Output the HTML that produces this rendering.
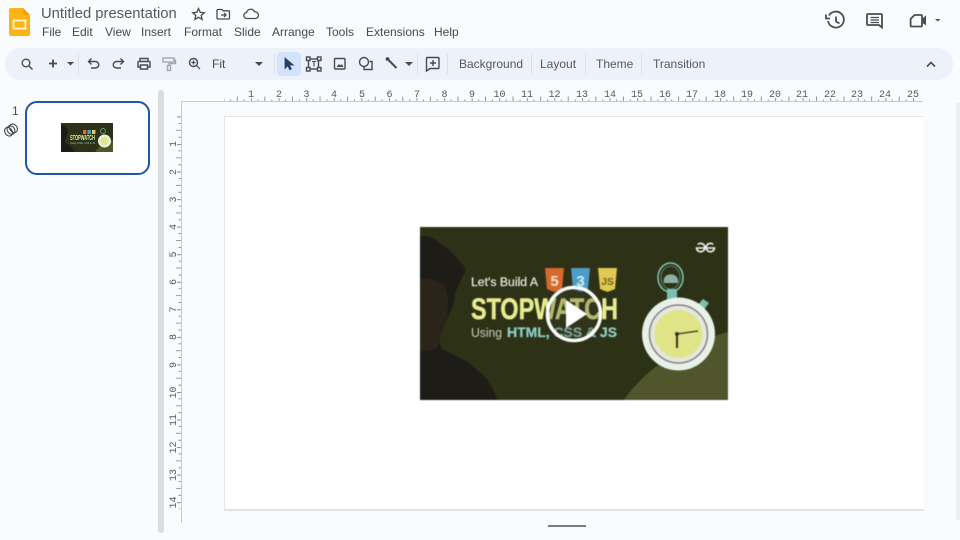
<!DOCTYPE html>
<html><head><meta charset="utf-8"><title>Untitled presentation</title>
<style>
*{box-sizing:border-box}
html,body{margin:0;padding:0;width:960px;height:540px;overflow:hidden;background:#f9fbfd;font-family:"Liberation Sans",sans-serif;color:#444746}
.a{position:absolute}
#title{left:41px;top:5px;font-size:14.800px;color:#55595d;white-space:nowrap;line-height:18px}
.m{position:absolute;top:25px;font-size:12px;line-height:15px;color:#46494c;white-space:nowrap}
#tb{left:5px;top:48px;width:948px;height:32px;background:#edf2fa;border-radius:16px}
.t{position:absolute;top:56.500px;font-size:12px;line-height:15px;color:#55595d;white-space:nowrap}
.sep{position:absolute;top:54px;width:1px;height:20px;background:#dbe0e7}
svg{position:absolute;overflow:visible}
#slide{left:224px;top:116px;width:700px;height:395px;background:#fff;border-left:1px solid #e6e6e6;border-top:1px solid #e6e6e6;border-bottom:2px solid #e3e3e3}
</style></head><body>

<svg style="left:9px;top:8px" width="22" height="29" viewBox="0 0 22 29"><path d="M2 0H14L21 7V26a2 2 0 0 1-2 2H2a2 2 0 0 1-2-2V2a2 2 0 0 1 2-2z" fill="#fbb416"/><path d="M14 0L21 7H16a2 2 0 0 1-2-2z" fill="#f29e0c"/><rect x="4.500" y="12.500" width="12" height="8" fill="none" stroke="#fff3d2" stroke-width="1.800"/></svg>

<div id="title" class="a">Untitled presentation</div>
<svg style="left:191px;top:6px" width="70" height="16" viewBox="0 0 70 16" fill="none" stroke="#4a4d50" stroke-width="1.300"><path d="M7.500 2.500l1.700 3.800 4.100.4-3.100 2.700.9 4-3.600-2.100-3.600 2.100.9-4-3.100-2.700 4.100-.4z"/><path d="M27 3.500h4l1.300 1.300h5.200a1 1 0 0 1 1 1v6.200a1 1 0 0 1-1 1H27a1 1 0 0 1-1-1V4.500a1 1 0 0 1 1-1zM30 9h5M33 7l2 2-2 2"/><path d="M56 12.500a3 3 0 0 1-.4-6 4.200 4.200 0 0 1 8-.6 3.300 3.300 0 0 1 1 6.600z"/></svg>

<div class="m" style="left:42px">File</div><div class="m" style="left:72px">Edit</div><div class="m" style="left:105px">View</div><div class="m" style="left:141px">Insert</div><div class="m" style="left:184px">Format</div><div class="m" style="left:234px">Slide</div><div class="m" style="left:272px">Arrange</div><div class="m" style="left:326px">Tools</div><div class="m" style="left:366px">Extensions</div><div class="m" style="left:434px">Help</div>

<svg style="left:825px;top:10px" width="120" height="22" viewBox="0 0 120 22" fill="none" stroke="#4b4e51" stroke-width="1.800"><path d="M4 5.500A8 8 0 1 1 3 11M1 4.500v4h4M11 6.500v5l3.500 2"/><path d="M43 4h13a1 1 0 0 1 1 1v10l0 2.500-3-2.500H43a1 1 0 0 1-1-1V5a1 1 0 0 1 1-1z"/><path d="M45.500 7.500h8.500M45.500 10h8.500M45.500 12.500h8.500" stroke-width="1.300"/><path d="M89.500 5h6.500a1 1 0 0 1 1 1v9.500a1 1 0 0 1-1 1h-9.500a.9.900 0 0 1-.9-.9V9z"/><path d="M97 9.500l3.500-3v8l-3.500-2.500z" fill="#4b4e51" stroke-width="1"/><path d="M110 9h5.500l-2.750 2.500z" fill="#4b4e51" stroke="none"/></svg>

<div id="tb" class="a"></div>
<div class="a" style="left:277px;top:52px;width:24px;height:24px;background:#d3e3fd;border-radius:4px"></div>
<svg style="left:0;top:48px" width="960" height="32" viewBox="0 0 960 32" fill="none" stroke="#484b4e" stroke-width="1.400">
<circle cx="26" cy="15" r="3.800"/><path d="M29 18l3.500 3.500"/>
<path d="M53 11.500v8M49 15.500h8" stroke-width="1.800"/><path d="M67 14h7l-3.500 3.500z" fill="#484b4e" stroke="none"/>
<path d="M89 13.500h6.500a3.200 3.200 0 0 1 0 6.500H91M91.500 10.500l-3 3 3 3"/>
<path d="M123 13.500h-6.500a3.200 3.200 0 0 0 0 6.500H121M120.500 10.500l3 3-3 3"/>
<path d="M140 14v-3.500h8V14M140 19h-2v-4.500a1 1 0 0 1 1-1h10a1 1 0 0 1 1 1V19h-2M140.500 17h7v4h-7z"/>
<g stroke="#a5a9ae"><rect x="163" y="10" width="11" height="4"/><path d="M174 12h1.500v3.500H169V17"/><rect x="167.500" y="17.500" width="3" height="5"/></g>
<circle cx="193.500" cy="14.500" r="4"/><path d="M196.500 17.500l3.500 3.500M191.500 14.500h4M193.500 12.500v4" stroke-width="1.200"/>
<path d="M255 14h8l-4 4z" fill="#484b4e" stroke="none"/>
<path d="M285 10v10.500l2.800-2.800 2 4 1.600-.8-2-3.900h4z" fill="#2c3e63" stroke="#2c3e63" stroke-width=".8"/>
<rect x="308.500" y="11" width="10" height="10"/><g fill="#f1f4fa"><rect x="306.500" y="9" width="3.500" height="3.500"/><rect x="317.500" y="9" width="3.500" height="3.500"/><rect x="306.500" y="19.500" width="3.500" height="3.500"/><rect x="317.500" y="19.500" width="3.500" height="3.500"/></g><path d="M312 13.500h4M314 13.500v5" stroke-width="1.100"/>
<rect x="334.500" y="10.500" width="10.500" height="10.500" rx="1"/><path d="M336.500 19l2.500-3 1.500 1.500 1.500-1.500 1.500 3z" fill="#484b4e" stroke="none"/>
<circle cx="364" cy="14" r="4.500"/><path d="M369.500 13.500h2.500v8h-8v-3"/>
<path d="M387.500 11l9 9" stroke-width="2"/><circle cx="387.500" cy="11" r="1.200" fill="#484b4e"/>
<path d="M405 14h8l-4 4z" fill="#484b4e" stroke="none"/>
<path d="M427 9.500h11a1 1 0 0 1 1 1v9a1 1 0 0 1-1 1h-8l-3.500 2.500V10.500a1 1 0 0 1 .5-1zM433 12v6M430 15h6"/>
<path d="M927 18.500l4-4 4 4" stroke-width="1.600"/>
</svg>
<div class="sep" style="left:78px"></div><div class="sep" style="left:274px"></div><div class="sep" style="left:417px"></div><div class="sep" style="left:447px"></div><div class="sep" style="left:531px"></div><div class="sep" style="left:585px"></div><div class="sep" style="left:641px"></div>
<div class="t" style="left:212px;color:#46494c">Fit</div><div class="t" style="left:459px">Background</div><div class="t" style="left:540px">Layout</div><div class="t" style="left:596px">Theme</div><div class="t" style="left:653px">Transition</div>

<div class="a" style="left:12px;top:104px;font-size:12px;line-height:15px;color:#4a4d50">1</div>
<svg style="left:3px;top:122px" width="16" height="16" viewBox="0 0 16 16" fill="none" stroke="#45484b" stroke-width="1.100"><g transform="rotate(-35 8 8)"><ellipse cx="5" cy="8" rx="3.600" ry="4.600"/><ellipse cx="8" cy="8" rx="3.600" ry="4.600"/><ellipse cx="11" cy="8" rx="3.600" ry="4.600"/></g></svg>

<div class="a" style="left:25px;top:101px;width:125px;height:74px;background:#fff;border:2px solid #1f57a8;border-radius:12px"></div>
<svg style="left:61px;top:123px;filter:blur(.3px)" width="52" height="29" viewBox="0 0 52 29"><rect width="52" height="29" fill="#2d3216"/><path d="M0 2c4 0 7 4 7 7-1 4-3 6-3 11 4 1 8 4 9 9H0z" fill="#1c1b18"/><path d="M34 29c4-6 10-10 18-12v12z" fill="#50552b"/><rect x="22" y="7" width="3.400" height="4" fill="#dd6b2e"/><rect x="26.500" y="7" width="3.400" height="4" fill="#4b9cc9"/><rect x="31" y="7" width="3.400" height="4" fill="#e4c957"/><text x="9" y="17" font-family="Liberation Sans" font-weight="700" font-size="7" fill="#e3e88e" textLength="25" lengthAdjust="spacingAndGlyphs">STOPWATCH</text><text x="9" y="21" font-family="Liberation Sans" font-size="3" fill="#8ed0c6" textLength="25" lengthAdjust="spacingAndGlyphs">Using HTML, CSS &amp; JS</text><circle cx="43.500" cy="18" r="6.500" fill="#e9f0dc"/><circle cx="43.500" cy="18" r="4" fill="#dfe58a"/><circle cx="42" cy="8" r="2.500" fill="none" stroke="#7cb4a8" stroke-width=".7"/></svg>

<div class="a" style="left:158px;top:90px;width:6px;height:443px;background:#dadcdf;border-radius:3px"></div>
<div class="a" style="left:956px;top:103px;width:4px;height:417px;background:#eceef0"></div>

<svg style="left:181px;top:84px" width="750" height="20" viewBox="181 84 750 20" font-family="Liberation Mono" font-size="10" fill="#55585b" text-anchor="middle">
<defs><pattern id="hr" x="223.500" y="84" width="27.580" height="18" patternUnits="userSpaceOnUse"><g stroke="#7a7d80" stroke-width=".8"><path d="M.4 14v4M6.900 15.500V18M13.800 12.500V18M20.700 15.500V18"/></g></pattern>
<pattern id="vr" x="172" y="116.500" width="10" height="27.550" patternUnits="userSpaceOnUse"><g stroke="#7a7d80" stroke-width=".8"><path d="M5 .4h4M6.500 6.900H9M4 13.800h5M6.500 20.700H9"/></g></pattern></defs>
<rect x="224" y="84" width="692" height="18" fill="url(#hr)"/><path d="M181 101.500H923" stroke="#c8cbce" stroke-width="1"/>
<text x="251" y="97">1</text><text x="279" y="97">2</text><text x="306.500" y="97">3</text><text x="334" y="97">4</text><text x="362" y="97">5</text><text x="389.500" y="97">6</text><text x="417" y="97">7</text><text x="444.500" y="97">8</text><text x="472" y="97">9</text><text x="499.500" y="97">10</text><text x="527" y="97">11</text><text x="554.500" y="97">12</text><text x="582" y="97">13</text><text x="610" y="97">14</text><text x="637" y="97">15</text><text x="665" y="97">16</text><text x="692" y="97">17</text><text x="720" y="97">18</text><text x="747" y="97">19</text><text x="775" y="97">20</text><text x="802" y="97">21</text><text x="830" y="97">22</text><text x="857" y="97">23</text><text x="885" y="97">24</text><text x="913" y="97">25</text>
</svg>
<svg style="left:165px;top:100px" width="20" height="425" viewBox="165 100 20 425" font-family="Liberation Mono" font-size="10" fill="#55585b" text-anchor="middle">
<rect x="172" y="116" width="10" height="393" fill="url(#vr)"/><path d="M181.500 102V523" stroke="#c8cbce"/>
<text transform="translate(176 144) rotate(-90)">1</text><text transform="translate(176 172) rotate(-90)">2</text><text transform="translate(176 199.500) rotate(-90)">3</text><text transform="translate(176 227) rotate(-90)">4</text><text transform="translate(176 254.500) rotate(-90)">5</text><text transform="translate(176 282) rotate(-90)">6</text><text transform="translate(176 309.500) rotate(-90)">7</text><text transform="translate(176 337) rotate(-90)">8</text><text transform="translate(176 365) rotate(-90)">9</text><text transform="translate(176 392.500) rotate(-90)">10</text><text transform="translate(176 420) rotate(-90)">11</text><text transform="translate(176 447.500) rotate(-90)">12</text><text transform="translate(176 475) rotate(-90)">13</text><text transform="translate(176 502.500) rotate(-90)">14</text>
</svg>

<div id="slide" class="a"></div>

<svg style="left:420px;top:227px;filter:blur(.45px)" width="308" height="173" viewBox="0 0 308 173">
<rect width="308" height="173" fill="#2d3216"/>
<path d="M204 173c22-32 58-55 104-68v68z" fill="#50552b"/>
<path d="M0 9c7-1 14 2 20 7 8 5 14 11 20 19 4 3 6 6 5 9-2 6-6 12-8 18-3 5-2 10-4 16-3 8-6 14-9 20-3 7-5 14-4 20l2 4 26 13 14 12c8 7 14 20 15 26H0z" fill="#1e1c17"/>
<path d="M0 52c8-2 18 2 24 6 4 8 5 18 3 28-2 12-6 24-10 35-4 2-10 3-17 3z" fill="#2b241b"/>
<text x="51" y="59" font-family="Liberation Sans" font-size="11.500" fill="#f2f3ee" textLength="67" lengthAdjust="spacingAndGlyphs" stroke="#f2f3ee" stroke-width=".15">Let's Build A</text>
<path d="M125 41h19l-2 21-7.500 3-7.500-3z" fill="#d9682c"/><text x="134.500" y="59" font-family="Liberation Sans" font-weight="700" font-size="15" fill="#f6e6c8" text-anchor="middle">5</text>
<path d="M151 41h19l-2 21-7.500 3-7.500-3z" fill="#4c9dc9"/><text x="160.500" y="59" font-family="Liberation Sans" font-weight="700" font-size="15" fill="#d9eef0" text-anchor="middle">3</text>
<path d="M178 41h19l-2 21-7.500 3-7.500-3z" fill="#e2c752"/><text x="187.500" y="58" font-family="Liberation Sans" font-weight="700" font-size="10.500" fill="#6e6524" text-anchor="middle">JS</text>
<text x="51" y="92" font-family="Liberation Sans" font-weight="700" font-size="30" fill="#e6ec8f" stroke="#e6ec8f" stroke-width=".5" textLength="147" lengthAdjust="spacingAndGlyphs">STOPWATCH</text>
<text x="51" y="110" font-family="Liberation Sans" font-size="13" fill="#c9cfc0" textLength="31" lengthAdjust="spacingAndGlyphs">Using</text>
<text x="87" y="110" font-family="Liberation Sans" font-weight="700" font-size="14" fill="#8ed0c6" stroke="#8ed0c6" stroke-width=".25" textLength="110" lengthAdjust="spacingAndGlyphs">HTML, CSS &amp; JS</text>
<circle cx="154" cy="87" r="26.500" fill="#3b3f24" fill-opacity=".3" stroke="#fff" stroke-width="3.500"/>
<path d="M146 73l21 14-21 14z" fill="#fff"/>
<g fill="none" stroke="#f2f3ee" stroke-width="1.600"><path d="M277.800 17.500A4.200 4.200 0 1 1 276.500 21H285.500"/><path d="M293.200 17.500A4.200 4.200 0 1 0 294.500 21H285.500"/></g>
<ellipse cx="250.500" cy="50.500" rx="12.500" ry="14.500" fill="none" stroke="#86c4b6" stroke-width="1.500"/><ellipse cx="250.500" cy="50.500" rx="9.500" ry="11.500" fill="none" stroke="#5f9488" stroke-width=".8"/>
<path d="M244 56c-3-11 16-12 14 0z" fill="#8ab3a5"/><rect x="247" y="62" width="10" height="11" fill="#7bbfae"/><path d="M276 80l7-8 6 4-6 8z" fill="#7bbfae"/>
<circle cx="258.500" cy="107" r="36.500" fill="#e8f1e9"/><circle cx="258.500" cy="107" r="29" fill="#e3e7de" stroke="#8a7f80" stroke-width="1.500"/><circle cx="258.500" cy="107" r="24" fill="#dfe587"/>
<path d="M257 107l21-3" stroke="#2f3320" stroke-width="1.200" fill="none"/><path d="M257 107v14" stroke="#2f3320" stroke-width="2" fill="none"/><circle cx="257" cy="107" r="2" fill="#2f3320"/>
</svg>

<div class="a" style="left:548px;top:525px;width:38px;height:2px;background:#7a7d80"></div>
</body></html>
